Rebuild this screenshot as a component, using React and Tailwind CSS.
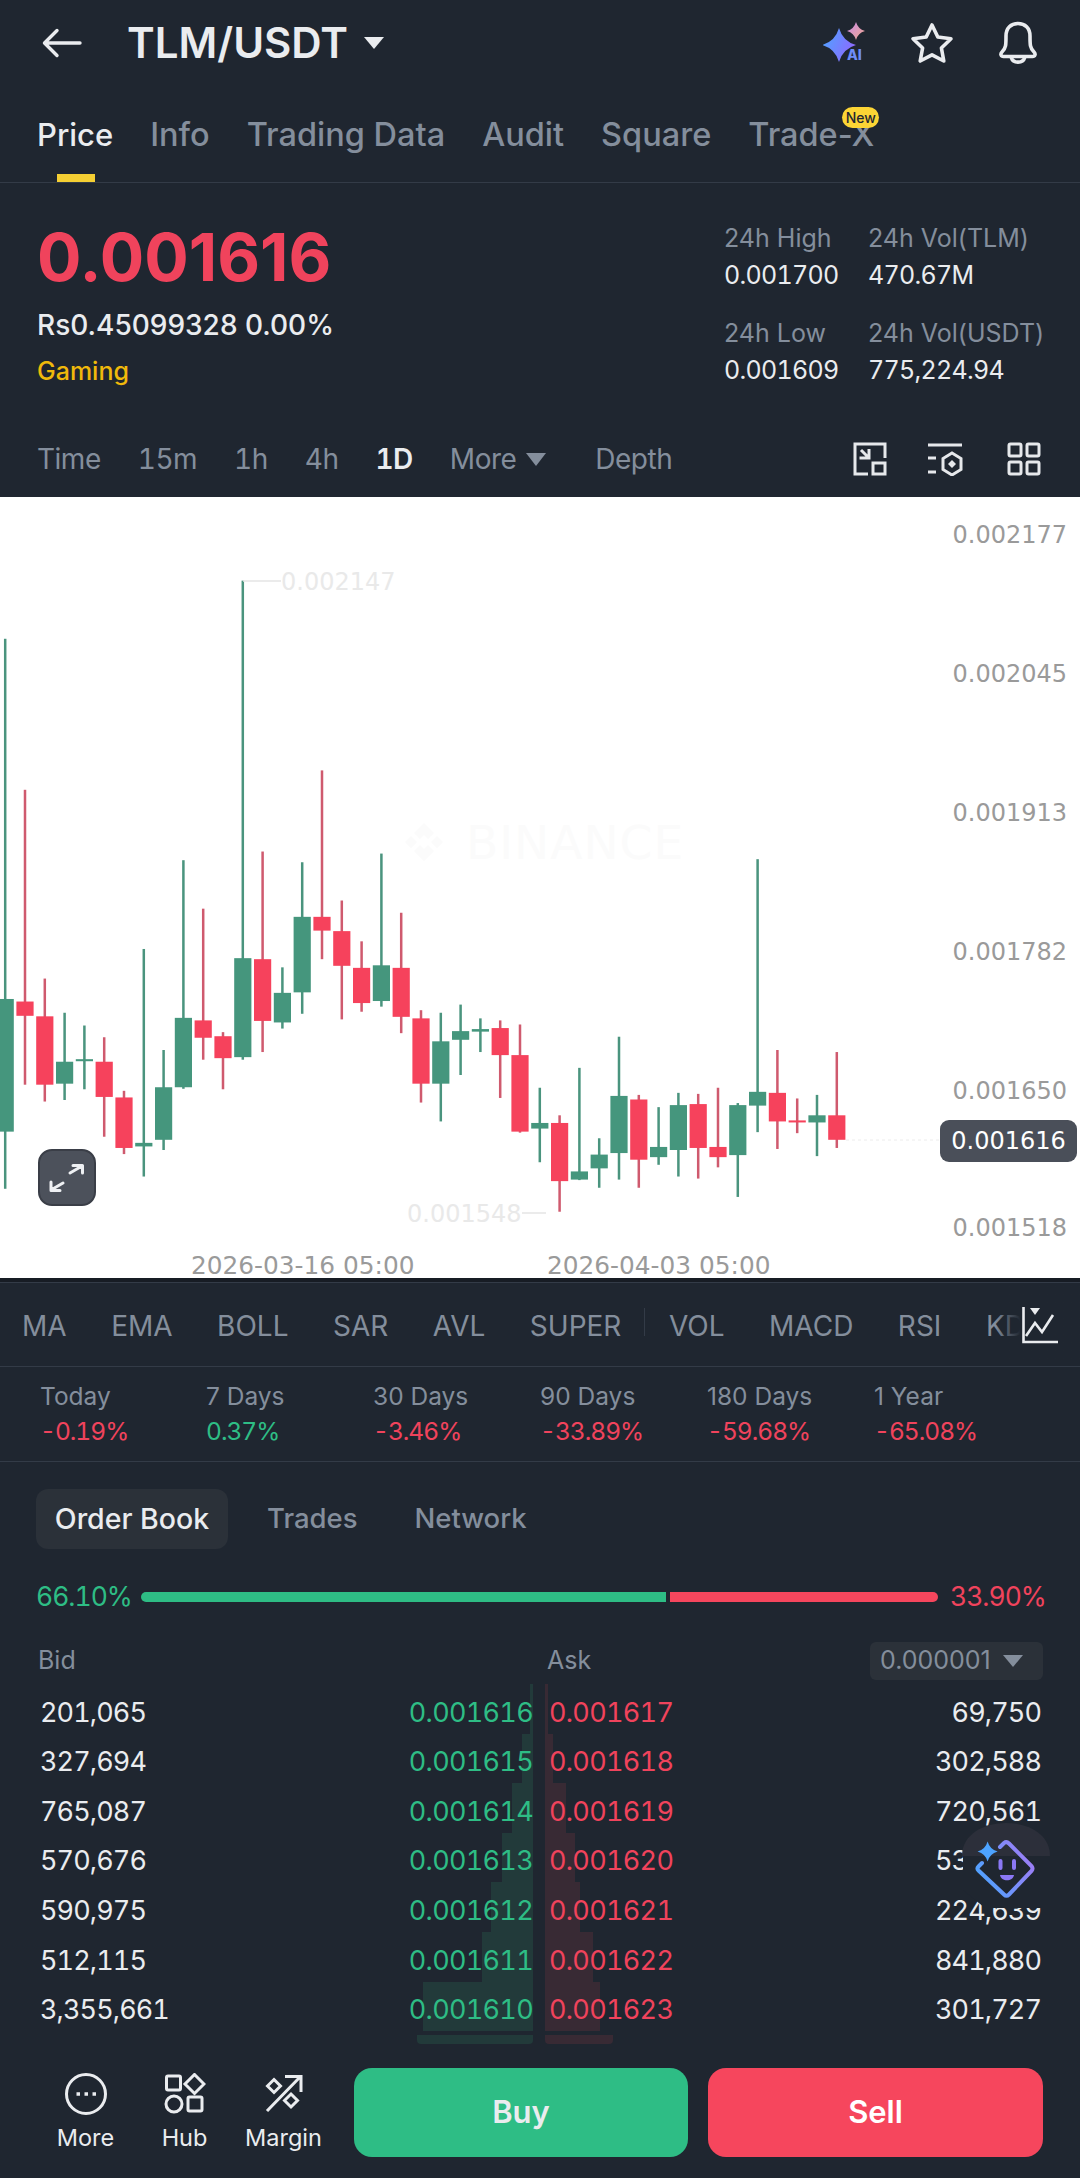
const FONT = 'font-["Inter",sans-serif]';

const TABS = ['Price', 'Info', 'Trading Data', 'Audit', 'Square', 'Trade-X'];
const INDICATORS = ['MA', 'EMA', 'BOLL', 'SAR', 'AVL', 'SUPER', 'VOL', 'MACD', 'RSI', 'KDJ'];
const PERIODS = [
  { label: 'Today', value: '-0.19%', up: false },
  { label: '7 Days', value: '0.37%', up: true },
  { label: '30 Days', value: '-3.46%', up: false },
  { label: '90 Days', value: '-33.89%', up: false },
  { label: '180 Days', value: '-59.68%', up: false },
  { label: '1 Year', value: '-65.08%', up: false },
];

// bidQty, bidPrice, askPrice, askQty, depth bar widths
const ROWS = [
  ['201,065', '0.001616', '0.001617', '69,750', 3, 3],
  ['327,694', '0.001615', '0.001618', '302,588', 11, 8],
  ['765,087', '0.001614', '0.001619', '720,561', 21, 21],
  ['570,676', '0.001613', '0.001620', '530,874', 31, 30],
  ['590,975', '0.001612', '0.001621', '224,639', 42, 35],
  ['512,115', '0.001611', '0.001622', '841,880', 51, 48],
  ['3,355,661', '0.001610', '0.001623', '301,727', 110, 55],
];

// candles: [wickTop, wickBottom, bodyTop, bodyBottom, up] measured from the chart crop
const CANDLES = [
  [272, 1350, 978, 1238, 1], [568, 1146, 983, 1011, 0], [938, 1179, 1012, 1146, 0], [1005, 1176, 1101, 1144, 1],
  [1030, 1155, 1096, 1100, 1], [1053, 1248, 1101, 1170, 0], [1158, 1282, 1171, 1270, 0], [880, 1326, 1260, 1267, 1],
  [1078, 1274, 1151, 1254, 1], [706, 1154, 1015, 1151, 1], [801, 1097, 1020, 1054, 0], [1043, 1155, 1051, 1094, 0],
  [158, 1097, 898, 1092, 1], [689, 1082, 900, 1021, 0], [916, 1036, 966, 1024, 1], [710, 1007, 817, 965, 1],
  [530, 900, 817, 844, 0], [785, 1018, 845, 913, 0], [865, 1003, 917, 986, 0], [693, 993, 912, 982, 1],
  [809, 1045, 917, 1013, 0], [1000, 1181, 1016, 1144, 0], [1005, 1218, 1061, 1144, 1], [989, 1127, 1041, 1058, 1],
  [1016, 1082, 1037, 1042, 1], [1020, 1172, 1035, 1088, 0], [1028, 1240, 1088, 1238, 0], [1152, 1298, 1221, 1232, 1],
  [1206, 1395, 1221, 1335, 0], [1113, 1333, 1316, 1332, 1], [1251, 1348, 1283, 1310, 1], [1052, 1332, 1168, 1280, 1],
  [1166, 1348, 1175, 1293, 0], [1190, 1303, 1268, 1288, 1], [1162, 1326, 1186, 1274, 1], [1164, 1330, 1184, 1270, 0],
  [1152, 1308, 1268, 1288, 0], [1182, 1366, 1186, 1284, 1], [704, 1239, 1160, 1187, 1], [1078, 1272, 1162, 1218, 0],
  [1173, 1241, 1216, 1220, 0], [1166, 1286, 1206, 1220, 1], [1082, 1270, 1206, 1254, 0],
];

const AXIS = [
  ['0.002177', 37], ['0.002045', 176], ['0.001913', 315], ['0.001782', 454], ['0.001650', 593], ['0.001518', 730],
];

const toY = (v) => v / 1.96 + 3;

function Chart() {
  return (
    <div className="relative h-[781px] bg-white">
      <svg width="1080" height="781" viewBox="0 0 1080 781" className="block">
        <path d="M424 326 L434 336 L428 342 L424 338 L420 342 L414 336 Z M424 364 L414 354 L420 348 L424 352 L428 348 L434 354 Z M405 345 L411 339 L417 345 L411 351 Z M431 345 L437 339 L443 345 L437 351 Z" fill="#fbfbfb" />
        <text x="466" y="362" fontFamily="DejaVu Sans" fontSize="47" fill="#fbfbfb" letterSpacing="1">BINANCE</text>
        {CANDLES.map(([wt, wb, bt, bb, up], i) => {
          const cx = 5.2 + i * 19.8;
          return (
            <g key={i}>
              <rect x={cx - 1.25} y={toY(wt)} width="2.5" height={(wb - wt) / 1.96} fill={up ? '#4a947e' : '#cf5a6e'} />
              <rect x={cx - 8.6} y={toY(bt)} width="17.2" height={Math.max((bb - bt) / 1.96, 2)} fill={up ? '#45967d' : '#f6425c'} />
            </g>
          );
        })}
        <line x1="243" y1="84" x2="281" y2="84" stroke="#e4e4e4" strokeWidth="1.5" />
        <text x="281" y="93" fontFamily="DejaVu Sans" fontSize="24" fill="#e9e9e9">0.002147</text>
        <line x1="522" y1="716" x2="546" y2="716" stroke="#e4e4e4" strokeWidth="1.5" />
        <text x="407" y="725" fontFamily="DejaVu Sans" fontSize="24" fill="#e9e9e9">0.001548</text>
        <line x1="846" y1="643" x2="940" y2="643" stroke="#ececec" strokeWidth="1" strokeDasharray="3 3" />
        {AXIS.map(([label, y]) => (
          <text key={label} x="1067" y={y + 9} textAnchor="end" fontFamily="DejaVu Sans" fontSize="24" fill="#9a9a9a">{label}</text>
        ))}
        <text x="191" y="777" fontFamily="DejaVu Sans" fontSize="24.8" fill="#9a9a9a">2026-03-16 05:00</text>
        <text x="547" y="777" fontFamily="DejaVu Sans" fontSize="24.8" fill="#9a9a9a">2026-04-03 05:00</text>
      </svg>

      <div className="absolute left-[940px] top-[623px] flex h-[42px] w-[137px] items-center justify-center rounded-[9px] bg-[#4a4f59] font-['DejaVu_Sans',sans-serif] text-[24px] text-white">
        0.001616
      </div>
      <div className="absolute left-[38px] top-[652px] flex h-[57px] w-[58px] items-center justify-center rounded-[14px] border-2 border-[#3a3e47] bg-[#4c515b]">
        <svg width="38" height="30" viewBox="0 0 38 30" fill="none" stroke="#eef0f3" strokeWidth="3" strokeLinecap="round" strokeLinejoin="round">
          <path d="M22 10 L34 3 M25 2.5 H34.5 V10" />
          <path d="M15 20 L3 27 M3 19 V27.5 H12" />
        </svg>
      </div>
    </div>
  );
}

function Sparkle({ cx, cy, r, fill }) {
  const k = r * 0.22;
  return (
    <path
      d={`M${cx} ${cy - r} Q${cx + k} ${cy - k} ${cx + r} ${cy} Q${cx + k} ${cy + k} ${cx} ${cy + r} Q${cx - k} ${cy + k} ${cx - r} ${cy} Q${cx - k} ${cy - k} ${cx} ${cy - r}Z`}
      fill={fill}
    />
  );
}

function AiIcon() {
  return (
    <svg width="46" height="42" viewBox="0 0 46 42">
      <defs>
        <linearGradient id="aiBig" x1="0" y1="0" x2="1" y2="0.4">
          <stop offset="0" stopColor="#4aa8ff" />
          <stop offset="1" stopColor="#8a6cff" />
        </linearGradient>
        <linearGradient id="aiSmall" x1="0" y1="0" x2="1" y2="1">
          <stop offset="0" stopColor="#c98be8" />
          <stop offset="1" stopColor="#f0a98c" />
        </linearGradient>
      </defs>
      <Sparkle cx={16} cy={23} r={17} fill="url(#aiBig)" />
      <Sparkle cx={33} cy={9} r={9} fill="url(#aiSmall)" />
      <text x="24" y="38" fontFamily="Inter" fontWeight="800" fontSize="14" fill="#6e8cf7">AI</text>
    </svg>
  );
}

function Header() {
  return (
    <div className="flex h-[86px] items-center pl-[42px] pr-[41px]">
      <svg width="40" height="32" viewBox="0 0 40 32" fill="none" stroke="#eaecef" strokeWidth="3.4" strokeLinecap="round" strokeLinejoin="round">
        <path d="M38 16 H3 M15 3.5 L2.5 16 L15 28.5" />
      </svg>
      <span className="ml-[45px] text-[42px] font-semibold leading-none text-[#eaecef]">TLM/USDT</span>
      <svg width="22" height="14" viewBox="0 0 22 14" className="ml-[15px]">
        <path d="M1 1 H21 L11 13 Z" fill="#eaecef" />
      </svg>
      <div className="ml-auto flex items-center">
        <AiIcon />
        <svg width="44" height="42" viewBox="0 0 44 42" fill="none" stroke="#eaecef" strokeWidth="3.6" strokeLinejoin="round" className="ml-[41px]">
          <path d="M22 3 L27.8 15 L41 16.8 L31.4 26 L33.8 39 L22 32.8 L10.2 39 L12.6 26 L3 16.8 L16.2 15 Z" />
        </svg>
        <svg width="42" height="44" viewBox="0 0 42 44" fill="none" stroke="#eaecef" strokeWidth="3.6" strokeLinecap="round" className="ml-[43px]">
          <path d="M5 31 C9 27 9 24 9 15 C9 7 14 2.5 21 2.5 C28 2.5 33 7 33 15 C33 24 33 27 37 31 C39 33 38 35.5 35.5 35.5 H6.5 C4 35.5 3 33 5 31 Z" />
          <path d="M14.5 37 C16 42.5 26 42.5 27.5 37" />
        </svg>
      </div>
    </div>
  );
}

function Tabs() {
  return (
    <div className="flex h-[97px] gap-[37px] border-b border-[#333b47] pl-[37px] pt-[29px]">
      {TABS.map((tab, i) => (
        <div key={tab} className={`relative font-medium leading-[40px] ${i === 0 ? 'text-[31px] text-[#eaecef]' : 'text-[32.5px] text-[#848e9c]'}`}>
          {tab}
          {i === 0 && <div className="absolute left-[20px] top-[59px] h-[8px] w-[38px] bg-[#f5cf33]" />}
          {tab === 'Trade-X' && (
            <div className="absolute left-[94px] top-[-8px] flex h-[21px] w-[37px] items-center justify-center rounded-full bg-[#fcd535] text-[14px] font-medium leading-none text-[#1f2630]">
              New
            </div>
          )}
        </div>
      ))}
    </div>
  );
}

function Stat({ label, value }) {
  return (
    <div>
      <div className="text-[25px] leading-[36px] text-[#848e9c]">{label}</div>
      <div className="mt-px text-[25px] tabular-nums leading-[36px] tracking-[-0.7px] text-[#eaecef]">{value}</div>
    </div>
  );
}

function PriceBlock() {
  return (
    <div className="flex pl-[37px] pt-[37px]">
      <div className="mt-px">
        <div className="text-[66px] font-bold leading-[72px] text-[#f0435c]">0.001616</div>
        <div className="mt-[12px] text-[28px] font-medium leading-[40px] text-[#eaecef]">Rs0.45099328 0.00%</div>
        <div className="mt-[8px] text-[25px] font-medium leading-[36px] text-[#f0b90b]">Gaming</div>
      </div>
      <div className="ml-auto grid w-[356px] grid-cols-[144px_1fr] gap-y-[21px]">
        <Stat label="24h High" value="0.001700" />
        <Stat label="24h Vol(TLM)" value="470.67M" />
        <Stat label="24h Low" value="0.001609" />
        <Stat label="24h Vol(USDT)" value="775,224.94" />
      </div>
    </div>
  );
}

function Timeframes() {
  return (
    <div className="mt-[32px] flex h-[76px] items-center pl-[37px] pr-[39px] text-[28px] tabular-nums tracking-[-0.5px] text-[#848e9c]">
      <div className="flex items-center gap-[37px]">
        <span>Time</span>
        <span>15m</span>
        <span>1h</span>
        <span>4h</span>
        <span className="font-semibold text-[#eaecef]">1D</span>
        <span className="flex items-center gap-[10px]">
          More
          <svg width="20" height="13" viewBox="0 0 20 13"><path d="M0 0 H20 L10 13 Z" fill="#848e9c" /></svg>
        </span>
        <span className="ml-[12px]">Depth</span>
      </div>
      <div className="ml-auto flex items-center">
        <svg width="34" height="34" viewBox="0 0 34 34" fill="none" stroke="#e6e8eb" strokeWidth="3">
          <path d="M15 32 H2 V2 H32 V16" />
          <rect x="20" y="21" width="12" height="11" />
          <path d="M8 8 L16 16 M6.5 16 H16 V7" />
        </svg>
        <svg width="36" height="34" viewBox="0 0 36 34" fill="none" stroke="#e6e8eb" strokeWidth="3" className="ml-[41px]">
          <path d="M0 3 H34 M0 16 H8 M0 30 H8" />
          <path d="M24 11 L33 16.5 V27.5 L24 33 L15 27.5 V16.5 Z" />
          <path d="M24 18 L28 22 L24 26 L20 22 Z" fill="#e6e8eb" stroke="none" />
        </svg>
        <svg width="34" height="34" viewBox="0 0 34 34" fill="none" stroke="#e6e8eb" strokeWidth="3" className="ml-[43px]">
          <rect x="2" y="2" width="12" height="12" rx="1.5" />
          <rect x="20" y="2" width="12" height="12" rx="1.5" />
          <rect x="2" y="20" width="12" height="12" rx="1.5" />
          <rect x="20" y="20" width="12" height="12" rx="1.5" />
        </svg>
      </div>
    </div>
  );
}

function IndicatorRow() {
  return (
    <div className="relative flex h-[84px] items-center gap-[44.5px] overflow-hidden border-b border-[#333b47] pl-[22px] pt-[2px] text-[28px] text-[#848e9c]">
      {INDICATORS.map((name) => (
        <span key={name} className={name === 'VOL' ? 'relative ml-[3px] shrink-0 before:absolute before:left-[-25px] before:top-[3px] before:h-[28px] before:w-px before:bg-[#333b47]' : 'shrink-0'}>
          {name}
        </span>
      ))}
      <div className="absolute right-0 top-0 flex h-full w-[85px] items-center bg-gradient-to-r from-transparent to-[#1f2630] to-[30%] pl-[27px]">
        <svg width="36" height="38" viewBox="0 0 36 38" fill="none" stroke="#eaecef" strokeWidth="2.6">
          <path d="M1.5 1 V36 H36" />
          <path d="M4 30 L13 17 L20 26 L31 9" />
          <path d="M8 2 H18 L13 9 Z" fill="#eaecef" stroke="none" />
        </svg>
      </div>
    </div>
  );
}

function PeriodRow() {
  return (
    <div className="grid h-[95px] grid-cols-[166px_167px_167px_167px_167px_1fr] border-b border-[#333b47] pl-[40px] pt-[12px] text-[24.5px]">
      {PERIODS.map((p) => (
        <div key={p.label}>
          <div className="leading-[35px] text-[#848e9c]">{p.label}</div>
          <div className={`leading-[35px] tabular-nums tracking-[-1px] ${p.up ? 'text-[#2ebd85]' : 'text-[#f0435c]'}`}>{p.value}</div>
        </div>
      ))}
    </div>
  );
}

function OrderBook() {
  return (
    <div>
      <div className="mt-[27px] flex h-[60px] items-center pl-[36px] text-[27.5px] font-medium text-[#848e9c]">
        <div className="flex h-full w-[192px] items-center justify-center rounded-[12px] bg-[#2b3139] text-[28.5px] text-[#eaecef]">Order Book</div>
        <span className="ml-[39px]">Trades</span>
        <span className="ml-[57px]">Network</span>
      </div>

      <div className="mt-[28px] flex h-[40px] items-center pl-[36px] text-[26.5px] tabular-nums tracking-[-1px]">
        <span className="w-[95px] text-[#2ebd85]">66.10%</span>
        <div className="ml-[10px] h-[10px] w-[525px] rounded-l-full bg-[#2ebd85]" />
        <div className="ml-[4px] h-[10px] w-[268px] rounded-r-full bg-[#f6465d]" />
        <span className="ml-[12px] text-[#f0435c]">33.90%</span>
      </div>

      <div className="mt-[25px] flex h-[38px] items-center pl-[38px] pr-[37px] text-[25px] text-[#848e9c]">
        <span className="w-[509px]">Bid</span>
        <span>Ask</span>
        <div className="ml-auto flex h-full w-[173px] items-center gap-[12px] rounded-[6px] bg-[#2b3139] pl-[10px]">
          0.000001
          <svg width="20" height="12" viewBox="0 0 20 12"><path d="M0 0 H20 L10 12 Z" fill="#848e9c" /></svg>
        </div>
      </div>

      <div className="relative mt-[8px]">
        {ROWS.map(([bidQty, bid, ask, askQty, bidBar, askBar]) => (
          <div key={bid} className="relative flex h-[49.6px] items-center text-[27px] tabular-nums">
            <div className="absolute right-[547px] top-[-4px] h-[49.6px] bg-[#223a3a]" style={{ width: bidBar }} />
            <div className="absolute left-[545px] top-[-4px] h-[49.6px] bg-[#382a34]" style={{ width: askBar }} />
            <div className="relative flex w-[533px] justify-between pl-[40px]">
              <span className="tracking-[-0.9px] text-[#eaecef]">{bidQty}</span>
              <span className="tracking-[-0.7px] text-[#2ebd85]">{bid}</span>
            </div>
            <div className="relative ml-[16px] flex w-[492px] justify-between">
              <span className="tracking-[-0.7px] text-[#f0435c]">{ask}</span>
              <span className="tracking-[-0.9px] text-[#eaecef]">{askQty}</span>
            </div>
          </div>
        ))}
        <div className="flex h-[9px]">
          <div className="ml-[417px] h-full w-[116px] rounded-b-[4px] bg-[#223a3a]" />
          <div className="ml-[12px] h-full w-[68px] rounded-b-[4px] bg-[#382a34]" />
        </div>
        <Assistant />
      </div>
    </div>
  );
}

function Assistant() {
  return (
    <svg width="92" height="92" viewBox="0 0 92 92" fill="none" className="absolute left-[960px] top-[134px]">
      <defs>
        <linearGradient id="botLine" x1="0" y1="0.7" x2="1" y2="0.2">
          <stop offset="0" stopColor="#4da3ff" />
          <stop offset="1" stopColor="#a27bf5" />
        </linearGradient>
      </defs>
      <path d="M3 20 H88 V86 H25 L3 68 Z" fill="#1f2630" />
      <path d="M2 34 C2 12 24 1 46 1 C68 1 90 12 90 34 Z" fill="#2c2f3a" />
      <path d="M3 34 H88 V40 H3 Z" fill="#1f2630" />
      <path d="M22 41 L18.5 44.5 Q16.5 46.5 18.5 48.5 L44 72.5 Q46.5 75 49 72.5 L71.5 49 Q73.5 46.5 71.5 44 L49 21.5 Q46.5 19 44 21 L40 25" stroke="url(#botLine)" strokeWidth="4" strokeLinecap="round" />
      <Sparkle cx={27.6} cy={29.6} r={10} fill="#4da3ff" />
      <path d="M40.5 39 V46 M54 39 V46" stroke="#8b78f5" strokeWidth="4" strokeLinecap="round" />
      <path d="M40 53 H54 C53 60 41 60 40 53 Z" fill="#8b78f5" />
    </svg>
  );
}

function ActionBar() {
  return (
    <div className="mt-[24px] flex pl-[36px]">
      <div className="flex w-[99px] flex-col items-center pt-[5px]">
        <svg width="42" height="42" viewBox="0 0 42 42" fill="none" stroke="#eaecef" strokeWidth="3">
          <circle cx="21" cy="21" r="19.5" />
          <path d="M11.5 21 H15 M19.5 21 H23 M27.5 21 H31" strokeWidth="3.4" />
        </svg>
        <span className="mt-[6px] text-[23.5px] leading-[34px] text-[#eaecef]">More</span>
      </div>
      <div className="flex w-[99px] flex-col items-center pt-[5px]">
        <svg width="42" height="42" viewBox="0 0 42 42" fill="none" stroke="#eaecef" strokeWidth="3">
          <rect x="2.5" y="3" width="14" height="14" rx="1.5" />
          <path d="M30.5 1.5 L40 11 L30.5 20.5 L21 11 Z" />
          <circle cx="10" cy="31" r="8" />
          <rect x="24" y="24" width="14" height="14" rx="1.5" />
        </svg>
        <span className="mt-[6px] text-[23.5px] leading-[34px] text-[#eaecef]">Hub</span>
      </div>
      <div className="flex w-[99px] flex-col items-center pt-[5px]">
        <svg width="42" height="42" viewBox="0 0 42 42" fill="none" stroke="#eaecef" strokeWidth="3">
          <path d="M4 38 L37 4 M22 3.5 H38 V19" />
          <path d="M11 6.5 L17.5 13 L11 19.5 L4.5 13 Z" />
          <path d="M28 21 L34.5 27.5 L28 34 L21.5 27.5 Z" />
        </svg>
        <span className="mt-[6px] text-[23.5px] leading-[34px] text-[#eaecef]">Margin</span>
      </div>
      <div className="ml-[21px] flex h-[89px] w-[334px] items-center justify-center rounded-[18px] bg-[#2ebd85] text-[31px] font-semibold text-[#eaecef]">Buy</div>
      <div className="ml-[20px] flex h-[89px] w-[335px] items-center justify-center rounded-[18px] bg-[#f6465d] text-[31px] font-semibold text-white">Sell</div>
    </div>
  );
}

export default function App() {
  return (
    <div className={`h-[2178px] w-[1080px] overflow-hidden bg-[#1f2630] ${FONT}`}>
      <Header />
      <Tabs />
      <PriceBlock />
      <Timeframes />
      <Chart />
      <div className="h-[5px] border-b border-[#333b47] bg-[#171c24]" />
      <IndicatorRow />
      <PeriodRow />
      <OrderBook />
      <ActionBar />
    </div>
  );
}
